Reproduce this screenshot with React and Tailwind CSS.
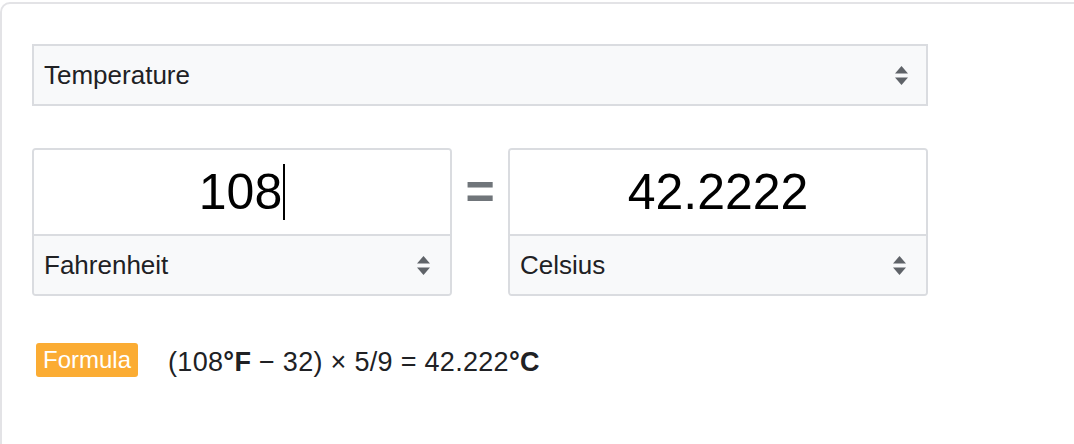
import React from "react";

function Arrows() {
  return (
    <svg width="13" height="19" viewBox="0 0 13 19" className="shrink-0">
      <polygon points="6.5,0 13,7.5 0,7.5" fill="#5f6368" />
      <polygon points="0,11.5 13,11.5 6.5,19" fill="#5f6368" />
    </svg>
  );
}

function Box({ value, unit, caret }) {
  return (
    <div className="w-[420px] h-[148px] border-2 border-[#dadce0] rounded-[4px] flex flex-col overflow-hidden">
      <div className="h-[86px] border-b-2 border-[#dadce0] bg-white flex items-center justify-center">
        <span className="text-[50px] leading-none text-black flex items-center">
          {value}
          {caret && <span className="inline-block w-[2px] h-[56px] bg-black ml-[1px]" />}
        </span>
      </div>
      <div className="flex-1 bg-[#f8f9fa] flex items-center justify-between pl-[10px] pr-[20px]">
        <span className="text-[26px] text-[#202124]">{unit}</span>
        <Arrows />
      </div>
    </div>
  );
}

export default function App() {
  return (
    <div
      className="bg-white w-[1074px] h-[444px] overflow-hidden pt-[2px]"
      style={{ fontFamily: "'Liberation Sans', Arial, sans-serif" }}
    >
      <div className="border-2 border-[#e3e3e6] rounded-[10px] w-[1100px] h-[460px] pl-[30px] pt-[40px]">
        <div className="w-[896px] h-[62px] border-2 border-[#dadce0] bg-[#f8f9fa] flex items-center justify-between pl-[10px] pr-[18px]">
          <span className="text-[26px] text-[#202124]">Temperature</span>
          <Arrows />
        </div>
        <div className="flex mt-[42px]">
          <Box value="108" unit="Fahrenheit" caret />
          <div className="w-[56px] h-[88px] flex items-center justify-center text-[50px] font-bold text-[#70757a] leading-none">
            =
          </div>
          <Box value="42.2222" unit="Celsius" />
        </div>
        <div className="flex items-center mt-[42px] ml-[4px]">
          <span className="h-[34px] px-[7px] rounded-[3px] bg-[#fbac33] text-white text-[24px] flex items-center">
            Formula
          </span>
          <span className="ml-[30px] text-[27px] tracking-[0.3px] text-[#202124] mt-[4px]">
            (108<b>°F</b> − 32) × 5/9 = 42.222<b>°C</b>
          </span>
        </div>
      </div>
    </div>
  );
}
